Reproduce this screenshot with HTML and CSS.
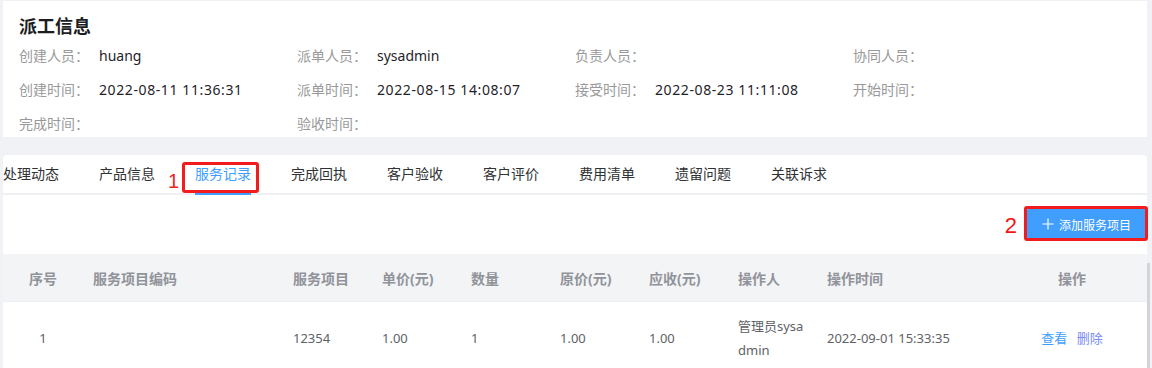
FILE: index.html
```html
<!DOCTYPE html>
<html lang="zh-CN">
<head>
    <meta charset="UTF-8">
    <meta name="viewport" content="width=device-width, initial-scale=1.0">
    <title>派工信息</title>
    <link rel="stylesheet" href="styles.css">
</head>
<body>
    <div class="page">
        <section class="card info-card">
            <h2 class="card-title">派工信息</h2>
            <div class="info-grid">
                <div class="info-item"><span class="label">创建人员：</span><span class="value">huang</span></div>
                <div class="info-item"><span class="label">派单人员：</span><span class="value">sysadmin</span></div>
                <div class="info-item"><span class="label">负责人员：</span><span class="value"></span></div>
                <div class="info-item"><span class="label">协同人员：</span><span class="value"></span></div>
                <div class="info-item"><span class="label">创建时间：</span><span class="value time">2022-08-11 11:36:31</span></div>
                <div class="info-item"><span class="label">派单时间：</span><span class="value time">2022-08-15 14:08:07</span></div>
                <div class="info-item"><span class="label">接受时间：</span><span class="value time">2022-08-23 11:11:08</span></div>
                <div class="info-item"><span class="label">开始时间：</span><span class="value"></span></div>
                <div class="info-item"><span class="label">完成时间：</span><span class="value"></span></div>
                <div class="info-item"><span class="label">验收时间：</span><span class="value"></span></div>
            </div>
        </section>

        <section class="card tabs-card">
            <div class="tabs">
                <div class="tab-item">处理动态</div>
                <div class="tab-item">产品信息</div>
                <div class="tab-item active">
                    <span class="tab-text">服务记录</span>
                    <span class="mark-num num-1">1</span>
                    <span class="mark-box box-1"></span>
                </div>
                <div class="tab-item">完成回执</div>
                <div class="tab-item">客户验收</div>
                <div class="tab-item">客户评价</div>
                <div class="tab-item">费用清单</div>
                <div class="tab-item">遗留问题</div>
                <div class="tab-item">关联诉求</div>
            </div>

            <div class="toolbar">
                <button class="add-btn">
                    <svg width="12" height="12" viewBox="0 0 12 12">
                        <path d="M6 0.5V11.5M0.5 6H11.5" stroke="#fff" stroke-width="1.2" fill="none"/>
                    </svg>
                    <span>添加服务项目</span>
                    <span class="mark-num num-2">2</span>
                    <span class="mark-box box-2"></span>
                </button>
            </div>

            <table class="record-table">
                <colgroup>
                    <col class="col-index">
                    <col class="col-code">
                    <col class="col-num">
                    <col class="col-num">
                    <col class="col-num">
                    <col class="col-num">
                    <col class="col-num">
                    <col class="col-num">
                    <col class="col-time">
                    <col class="col-action">
                </colgroup>
                <thead>
                    <tr>
                        <th class="center">序号</th>
                        <th>服务项目编码</th>
                        <th>服务项目</th>
                        <th>单价(元)</th>
                        <th>数量</th>
                        <th>原价(元)</th>
                        <th>应收(元)</th>
                        <th>操作人</th>
                        <th>操作时间</th>
                        <th class="center">操作</th>
                    </tr>
                </thead>
                <tbody>
                    <tr>
                        <td class="center">1</td>
                        <td></td>
                        <td>12354</td>
                        <td>1.00</td>
                        <td>1</td>
                        <td>1.00</td>
                        <td>1.00</td>
                        <td class="wrap">管理员sysadmin</td>
                        <td>2022-09-01 15:33:35</td>
                        <td class="center">
                            <a class="link" href="#">查看</a>
                            <a class="link visited" href="#">删除</a>
                        </td>
                    </tr>
                </tbody>
            </table>
        </section>
    </div>
    <div class="scroll-thumb"></div>
</body>
</html>
```

FILE: styles.css
```css
body {
    margin: 0;
    padding: 0;
    background-color: #f0f2f5;
    font-family: "Noto Sans", "Noto Sans CJK SC", sans-serif;
    font-size: 14px;
    color: #303133;
    overflow: hidden;
}
.page {
    padding: 1px 5px 0 3px;
}
.card {
    background-color: white;
}
.info-card {
    padding: 12px 16px 1px 16px;
}
.card-title {
    margin: 0 0 5px 0;
    font-size: 18px;
    font-weight: bold;
    line-height: 26px;
    color: #1d1d1f;
}
.info-grid {
    display: grid;
    grid-template-columns: repeat(4, minmax(0, 1fr));
    row-gap: 10px;
}
.info-item {
    display: flex;
    line-height: 24px;
}
.label {
    flex: 0 0 80px;
    color: #999;
}
.value {
    color: #1f2329;
}
.value.time {
    letter-spacing: 0.6px;
}
.tabs-card {
    margin-top: 18px;
    border-radius: 4px 4px 0 0;
}
.tabs {
    display: flex;
    border-bottom: 2px solid #eef0f3;
}
.tab-item {
    position: relative;
    height: 38px;
    line-height: 38px;
    padding: 0 20px;
    color: #303133;
}
.tab-item:first-child {
    padding-left: 0;
}
.tab-item.active {
    color: #409eff;
}
.tab-text {
    position: relative;
    display: inline-block;
}
.tab-item.active .tab-text::after {
    content: "";
    position: absolute;
    left: 0;
    right: 0;
    bottom: -2px;
    height: 2px;
    background-color: #409eff;
}
.mark-box {
    position: absolute;
    border: 3px solid #f21c1c;
    border-radius: 3px;
    pointer-events: none;
}
.mark-num {
    position: absolute;
    color: #f0261c;
    font-family: "Liberation Sans", Arial, sans-serif;
    line-height: 1;
}
.box-1 {
    left: 7px;
    top: 7px;
    width: 71px;
    height: 25px;
}
.num-1 {
    left: -7px;
    top: 16px;
    font-size: 20px;
}
.toolbar {
    display: flex;
    justify-content: flex-end;
    padding: 13px 1px 14px 0;
}
.add-btn {
    position: relative;
    display: flex;
    align-items: center;
    gap: 5px;
    height: 32px;
    padding: 0 15px;
    border: none;
    border-radius: 3px;
    background-color: #409eff;
    color: white;
    font-family: "Noto Sans CJK SC", sans-serif;
    font-size: 12px;
    cursor: pointer;
}
.box-2 {
    left: -3px;
    right: -2px;
    top: -2px;
    bottom: -1px;
}
.num-2 {
    right: calc(100% + 10px);
    top: 7px;
    font-size: 22px;
    color: #f21414;
}
.record-table {
    width: 100%;
    border-collapse: collapse;
    table-layout: fixed;
}
.col-index {
    width: 80px;
}
.col-code {
    width: 200px;
}
.col-num {
    width: 89px;
}
.col-time {
    width: 180px;
}
.col-action {
    width: 150px;
}
.record-table th {
    background-color: #f3f4f6;
    color: #909399;
    font-weight: bold;
    text-align: left;
    padding: 13px 10px 11px 10px;
    line-height: 23px;
    border-bottom: 1px solid #ebeef5;
}
.record-table td {
    color: #606266;
    font-size: 13px;
    padding: 12px 10px;
    line-height: 24px;
}
.record-table .center {
    text-align: center;
}
.record-table .wrap {
    word-break: break-all;
}
.link {
    color: #409eff;
    text-decoration: none;
    margin: 0 3px;
}
.link.visited {
    color: #7b8cf5;
}
.scroll-thumb {
    position: absolute;
    right: 2px;
    top: 263px;
    width: 3px;
    height: 120px;
    background-color: #d3d4d8;
}
```
